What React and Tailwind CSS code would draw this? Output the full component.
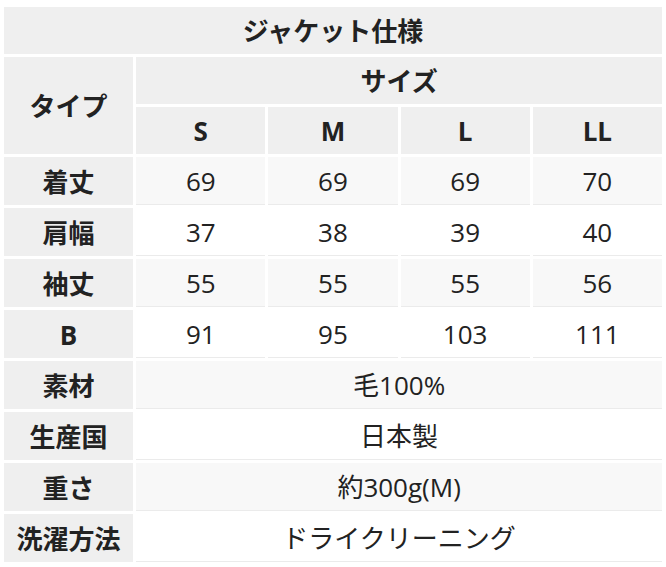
import React from "react";

const sizes = [
  ["着丈", "69", "69", "69", "70"],
  ["肩幅", "37", "38", "39", "40"],
  ["袖丈", "55", "55", "55", "56"],
  ["B", "91", "95", "103", "111"],
];
const info = [
  ["素材", "毛100%"],
  ["生産国", "日本製"],
  ["重さ", "約300g(M)"],
  ["洗濯方法", "ドライクリーニング"],
];

export default function App() {
  const th = "bg-[#efefef] font-bold text-center align-middle h-[47px] p-0 pt-[3px]";
  const td = "text-center align-middle h-[48px] p-0 pt-[3px] border-b border-[#ebebeb] ";
  return (
    <div
      className="bg-white w-[666px] h-[567px] px-[1px] pt-[4px] text-[#222] text-[26px] leading-[1.35]"
      style={{ fontFamily: '"Open Sans", "Noto Sans CJK JP", sans-serif' }}
    >
      <table className="w-full table-fixed border-separate border-spacing-[3px]">
        <tbody>
          <tr>
            <th colSpan={5} className={th}>ジャケット仕様</th>
          </tr>
          <tr>
            <th rowSpan={2} className={th}>タイプ</th>
            <th colSpan={4} className={th}>サイズ</th>
          </tr>
          <tr>
            <th className={th}>S</th>
            <th className={th}>M</th>
            <th className={th}>L</th>
            <th className={th}>LL</th>
          </tr>
          {sizes.map((r, i) => (
            <tr key={r[0]}>
              <th className={th}>{r[0]}</th>
              {r.slice(1).map((v, j) => (
                <td
                  key={j}
                  className={td + (i % 2 === 0 ? "bg-[#f8f8f8]" : "bg-white")}
                >
                  {v}
                </td>
              ))}
            </tr>
          ))}
          {info.map((r, i) => (
            <tr key={r[0]}>
              <th className={th}>{r[0]}</th>
              <td
                colSpan={4}
                className={td + (i % 2 === 0 ? "bg-[#f8f8f8]" : "bg-white")}
              >
                {r[1]}
              </td>
            </tr>
          ))}
        </tbody>
      </table>
    </div>
  );
}
